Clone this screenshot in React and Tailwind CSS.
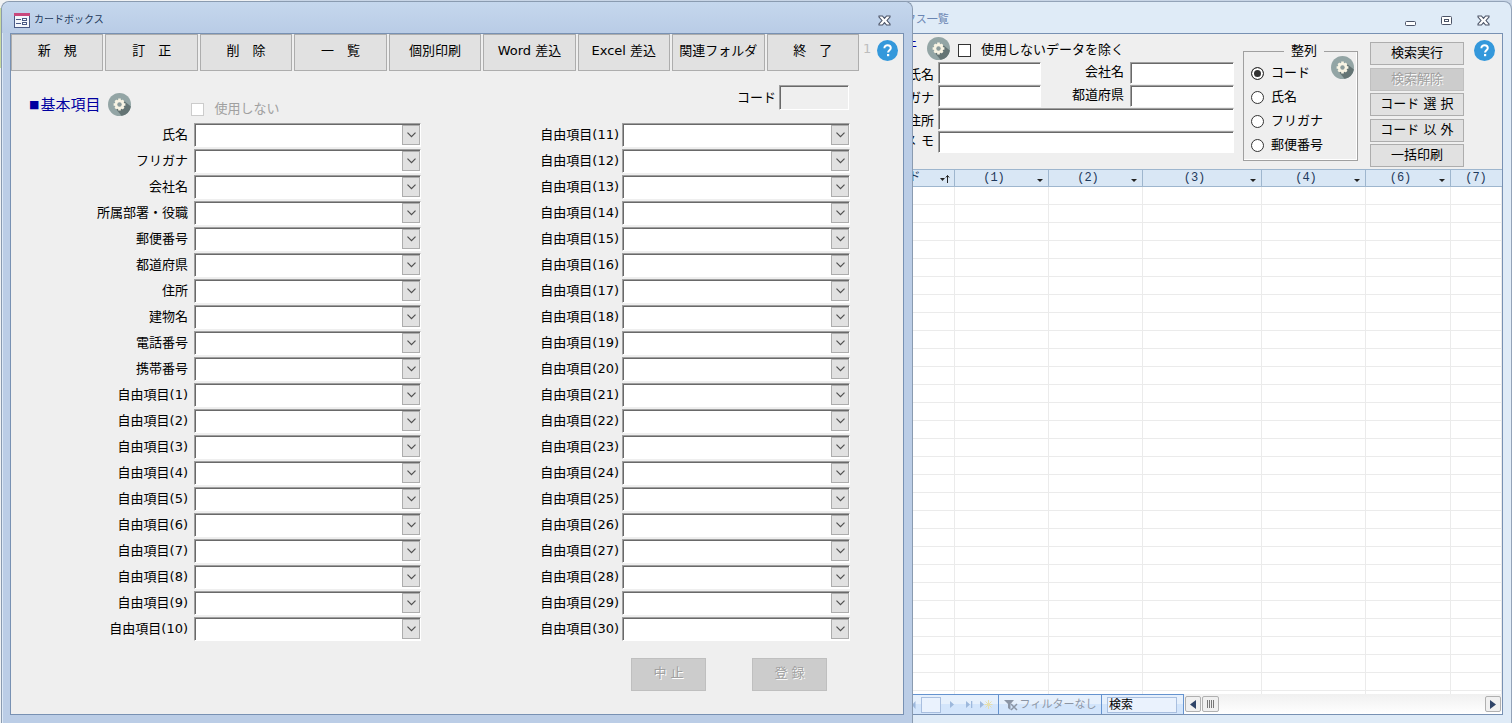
import { useState } from 'react';

const toolbar = ['新　規', '訂　正', '削　除', '一　覧', '個別印刷', 'Word 差込', 'Excel 差込', '関連フォルダ', '終　了'];

const leftFields = [
  '氏名', 'フリガナ', '会社名', '所属部署・役職', '郵便番号', '都道府県', '住所', '建物名', '電話番号', '携帯番号',
  ...Array.from({ length: 10 }, (_, i) => `自由項目(${i + 1})`),
];
const rightFields = Array.from({ length: 20 }, (_, i) => `自由項目(${i + 11})`);

const sortOptions = ['コード', '氏名', 'フリガナ', '郵便番号'];
const columns = ['(1)', '(2)', '(3)', '(4)', '(6)', '(7)'];

const sunken = 'border border-t-[#a0a0a0] border-l-[#a0a0a0] border-r-white border-b-white shadow-[inset_1px_1px_0_#696969] outline-none rounded-none';

function GearIcon() {
  return (
    <svg width="23" height="23" viewBox="0 0 23 23" className="block">
      <circle cx="11.5" cy="11.5" r="11.5" fill="#93a5a5" />
      <path d="M15.5 7.5 L22.9 13.5 A11.5 11.5 0 0 1 13.5 22.8 L7.5 15.5 Z" fill="#647474" />
      <g stroke="#f7f3e3" strokeWidth="2.6">
        <path d="M11.5 5.600v11.800M5.600 11.500h11.800M7.400 7.400l8.200 8.200M15.600 7.400l-8.200 8.200" />
      </g>
      <circle cx="11.5" cy="11.5" r="4.8" fill="#f7f3e3" />
      <circle cx="11.5" cy="11.5" r="2.2" fill="#8c9c9c" />
    </svg>
  );
}

function HelpButton() {
  return (
    <button type="button" aria-label="ヘルプ" className="block shrink-0">
      <svg width="21" height="21" viewBox="0 0 21 21" className="block">
        <circle cx="10.5" cy="10.5" r="10.5" fill="#3498db" />
        <path d="M7.4 8.2c0-1.9 1.3-3 3.2-3s3.2 1.1 3.2 2.8c0 2.2-2.7 2.3-2.7 4.5" fill="none" stroke="#fff" strokeWidth="2" />
        <rect x="10" y="14" width="2.2" height="2.2" fill="#fff" />
      </svg>
    </button>
  );
}

function CloseIcon() {
  return (
    <svg width="13" height="11" viewBox="0 0 13 11" className="block">
      <path
        d="M1 1h3.4l2.1 2.4L8.600 1H12v1L9 5.500l3 3.500v1H8.600L6.500 7.600 4.400 10H1V9l3-3.500L1 2z"
        fill="#fff" stroke="#4b5366" strokeWidth="1.1"
      />
    </svg>
  );
}

function FormIcon() {
  return (
    <svg width="16" height="15" viewBox="0 0 16 15" className="block">
      <rect x="0.500" y="0.500" width="15" height="14" fill="#f4f7fc" stroke="#4a5a85" />
      <rect width="16" height="3" fill="#c9487c" />
      <path d="M2 6.500h5M2 10.500h5" stroke="#4a5a85" />
      <rect x="8.500" y="5.500" width="4" height="2" fill="#fff" stroke="#4a5a85" />
      <rect x="8.500" y="9.500" width="4" height="2" fill="#fff" stroke="#4a5a85" />
    </svg>
  );
}

function Combo({ id, label, labelClass }) {
  return (
    <div className="flex items-center">
      <label htmlFor={id} className={`shrink-0 text-right whitespace-nowrap ${labelClass}`}>{label}</label>
      <div className="relative flex-1 min-w-0 h-6">
        <select id={id} className={`block w-full h-6 appearance-none bg-white ${sunken}`} />
        <span className="absolute top-[2px] bottom-[2px] right-[1px] w-[18px] border border-[#adadad] bg-[#e1e1e1] flex items-center justify-center pointer-events-none">
          <svg width="9" height="6" viewBox="0 0 9 6"><path d="M0.500 0.700l4 4 4-4" fill="none" stroke="#505050" strokeWidth="1.200" /></svg>
        </span>
      </div>
    </div>
  );
}

function CardWindow() {
  return (
    <section className="relative z-10 flex-1 min-w-0 flex flex-col rounded-t-lg border border-b-0 border-[#8a9bb0] bg-[#bbcde6] shadow-[inset_1px_1px_0_#dce8f6]">
      <header className="h-[31px] shrink-0 flex items-center pl-3 pr-[21px] pt-[5px] rounded-t-lg bg-linear-to-b from-[#c5d7ed] to-[#b9cce6]">
        <FormIcon />
        <h1 className="ml-1 text-[10px] text-[#1e395b]">カードボックス</h1>
        <button type="button" aria-label="閉じる" className="ml-auto"><CloseIcon /></button>
      </header>
      <main className="flex-1 flex flex-col mx-2 mb-2 border border-[#7891b3] bg-[#efefef]">
        <nav className="flex">
          <div className="flex-1 flex gap-[2px]">
            {toolbar.map((t) => (
              <button key={t} type="button" className="flex-1 basis-0 h-[37px] pb-1 border border-[#adadad] bg-[#e1e1e1] whitespace-nowrap">{t}</button>
            ))}
          </div>
          <div className="w-11 flex items-center pb-1 pl-1 gap-[6px]">
            <span className="text-[#bdbdbd] pb-1">1</span>
            <HelpButton />
          </div>
        </nav>

        <div className="flex items-start pt-3 h-[52px] pl-[18px] pr-[54px]">
          <h2 className="mt-3 flex items-center text-[15px] leading-5 text-[#0000a0]">
            <span className="text-[11px] mr-[1px]">■</span>基本項目
          </h2>
          <button type="button" aria-label="項目設定" className="mt-[10px] ml-2"><GearIcon /></button>
          <label className="mt-4 ml-[60px] flex items-center gap-[10px] text-[#a0a0a0]">
            <input type="checkbox" disabled className="appearance-none size-[13px] border border-[#cccccc] bg-white" />
            使用しない
          </label>
          <div className="ml-auto mt-[2px] flex items-center gap-[3px]">
            <label htmlFor="code">コード</label>
            <input id="code" readOnly className={`w-[70px] h-[25px] bg-[#efefef] ${sunken}`} />
          </div>
        </div>

        <div className="flex pr-[53px]">
          <div className="flex-1 basis-[410px] flex flex-col gap-[2px]">
            {leftFields.map((f, i) => <Combo key={f} id={`left-${i}`} label={f} labelClass="w-[183px] pr-[6px]" />)}
          </div>
          <div className="flex-1 basis-[429px] flex flex-col gap-[2px]">
            {rightFields.map((f, i) => <Combo key={f} id={`right-${i}`} label={f} labelClass="w-[201px] pr-[3px]" />)}
          </div>
        </div>

        <div className="flex justify-end gap-[46px] mt-[17px] pr-[76px]">
          {['中 止', '登 録'].map((t) => (
            <button key={t} type="button" disabled className="w-[75px] h-[33px] pb-1 border border-[#bfbfbf] bg-[#cccccc] text-[#a0a0a0] [text-shadow:1px_1px_0_#fff]">{t}</button>
          ))}
        </div>
      </main>
    </section>
  );
}

function SearchForm() {
  const [sort, setSort] = useState('コード');
  const input = `h-[22px] bg-white ${sunken}`;
  return (
    <div className="flex items-start h-[135px] shrink-0 bg-[#efefef]">
      <div className="flex-1 min-w-0">
        <div className="flex items-center h-7">
          <h2 className="w-[94px] text-right text-[15px] text-[#0000a0] leading-5 pb-1">条件</h2>
          <button type="button" aria-label="検索設定" className="ml-[10px]"><GearIcon /></button>
          <label className="ml-[8px] mt-1 flex items-center gap-[10px] whitespace-nowrap">
            <input type="checkbox" className="appearance-none size-[13px] border border-[#333333] bg-white" />
            使用しないデータを除く
          </label>
        </div>
        <div className="grid grid-cols-[111px_107px_83px_minmax(0,1fr)] gap-y-[1px] leading-[19px]">
          <label htmlFor="s-name" className="text-right pt-[3px]">氏名</label>
          <input id="s-name" className={`ml-1 ${input}`} />
          <label htmlFor="s-company" className="text-right">会社名</label>
          <input id="s-company" className={`ml-[6px] ${input}`} />
          <label htmlFor="s-kana" className="text-right pt-[3px]">フリガナ</label>
          <input id="s-kana" className={`ml-1 ${input}`} />
          <label htmlFor="s-pref" className="text-right">都道府県</label>
          <input id="s-pref" className={`ml-[6px] ${input}`} />
          <label htmlFor="s-address" className="text-right pt-[3px]">住所</label>
          <input id="s-address" className={`ml-1 col-span-3 ${input}`} />
          <label htmlFor="s-memo" className="text-right">メ モ</label>
          <input id="s-memo" className={`ml-1 col-span-3 ${input}`} />
        </div>
      </div>

      <fieldset className="relative ml-[9px] mt-[7px] w-[115px] h-[120px] shrink-0 border border-[#a0a0a0] pl-[7px] shadow-[inset_-1px_-1px_0_#fff]">
        <legend className="mx-auto px-[7px]">整列</legend>
        <div className="flex flex-col gap-1 pt-[2px]">
          {sortOptions.map((o) => (
            <label key={o} className="flex items-center gap-[7px]">
              <input
                type="radio" name="sort" checked={sort === o} onChange={() => setSort(o)}
                className="appearance-none size-[13px] rounded-full border border-[#333333] bg-white checked:bg-[#333333] checked:shadow-[inset_0_0_0_2px_white]"
              />
              {o}
            </label>
          ))}
        </div>
        <button type="button" aria-label="整列設定" className="absolute -top-[5px] right-[3px]"><GearIcon /></button>
      </fieldset>

      <div className="ml-3 mt-2 w-[94px] h-[125px] shrink-0 flex flex-col justify-between">
        {['検索実行', '検索解除', 'コード 選 択', 'コード 以 外', '一括印刷'].map((t) => (
          <button
            key={t} type="button" disabled={t === '検索解除'}
            className="h-[23px] pb-[2px] border border-[#adadad] bg-[#e1e1e1] leading-5 disabled:border-[#bfbfbf] disabled:bg-[#cccccc] disabled:text-[#a0a0a0] disabled:[text-shadow:1px_1px_0_#fff]"
          >
            {t}
          </button>
        ))}
      </div>
      <div className="ml-[10px] mr-[7px] mt-[6px]"><HelpButton /></div>
    </div>
  );
}

function RecordTable() {
  return (
    <div className="flex-1 min-h-0 overflow-hidden bg-white">
      <table className="w-full table-fixed border-collapse">
        <colgroup>
          <col className="w-[131px]" />
          <col className="w-[94px]" />
          <col className="w-[94px]" />
          <col className="w-[119px]" />
          <col className="w-[104px]" />
          <col className="w-[85px]" />
          <col />
        </colgroup>
        <thead>
          <tr className="h-[17px] bg-[#d9e7f5] text-[#1e395b] font-['Liberation_Mono','Noto_Sans_CJK_JP',monospace] text-[12px] leading-[15px]">
            <th className="p-0 font-normal border-y border-r border-[#9eb6ce]">
              <div className="flex items-center justify-end gap-[18px] pr-1">
                コード
                <svg width="11" height="9" viewBox="0 0 11 9"><path d="M1 4h5L3.500 7z" fill="#222" /><path d="M8.500 9V1.500M6.800 3.500l1.700-2 1.700 2" stroke="#222" fill="none" /></svg>
              </div>
            </th>
            {columns.map((c) => (
              <th key={c} className="p-0 font-normal border-y border-r border-[#9eb6ce] last:border-r-0">
                <div className="flex items-center">
                  <span className="flex-1 text-center">{c}</span>
                  {c !== '(7)' && (
                    <svg width="14" height="9" viewBox="0 0 14 9"><path d="M3 5h6L6 8z" fill="#222" /></svg>
                  )}
                </div>
              </th>
            ))}
          </tr>
        </thead>
        <tbody>
          {Array.from({ length: 29 }, (_, r) => (
            <tr key={r} className="h-[18px]">
              {Array.from({ length: 7 }, (_, c) => <td key={c} className="p-0 border-b border-r border-[#ebebeb]" />)}
            </tr>
          ))}
        </tbody>
      </table>
    </div>
  );
}

function RecordNav() {
  return (
    <footer className="flex h-5 shrink-0 bg-[#f4f4f4]">
      <div className="w-[361px] shrink-0 flex items-stretch border-t border-r border-[#6593cf] bg-linear-to-b from-[#e6f0fc] from-50% to-[#d3e5fb] to-50%">
        <div className="w-[176px] flex items-center justify-end border-r border-[#6593cf]">
          <svg width="6" height="8" viewBox="0 0 6 8"><path d="M4.500 0v8L1 4z" fill="#9db8dc" /></svg>
          <input aria-label="レコード" className="ml-1 w-5 h-4 border border-[#a9bfdf] bg-[#eaf2fd] outline-none" />
          <svg width="57" height="11" viewBox="0 0 57 11">
            <g fill="#9db8dc">
              <path d="M9 2v7l4-3.500zM25 2v7l4-3.500zM30 2h1.300v7H30zM39 2v7l4-3.500z" />
            </g>
            <path d="M47.500 1v9M43.500 5.500h8M44.500 2.500l6 6M50.500 2.500l-6 6" stroke="#e6dfae" />
          </svg>
        </div>
        <div className="w-[103px] flex items-center justify-center gap-[2px] border-r border-[#6593cf] text-[#8b95a5] text-[11px] whitespace-nowrap">
          <svg width="14" height="12" viewBox="0 0 14 12"><path d="M0 1h10L6.500 5v6L4 9V5z" fill="#8b95a5" /><path d="M7 5l6 6M13 5l-6 6" stroke="#8b95a5" strokeWidth="1.500" /></svg>
          フィルターなし
        </div>
        <input aria-label="レコードの検索" defaultValue="検索" className="self-center ml-[5px] w-[70px] h-4 border border-[#a9bfdf] bg-[#eaf2fd] px-[1px] text-[12px] outline-none" />
      </div>
      <div className="flex-1 flex items-center gap-[1px] pl-[1px] pr-[1px] bg-linear-to-b from-[#f0f0f0] to-white">
        <button type="button" aria-label="左へ" className="w-4 h-4 flex items-center justify-center rounded-xs border border-[#b0b0b0] bg-[#f0f0f0]">
          <svg width="6" height="9" viewBox="0 0 6 9"><path d="M6 0v9L0 4.500z" fill="#2f4468" /></svg>
        </button>
        <span className="w-[17px] h-4 flex items-center justify-center rounded-xs border border-[#b0b0b0] bg-[#f0f0f0]">
          <svg width="8" height="8" viewBox="0 0 8 8"><path d="M0.500 0v8M2.500 0v8M4.500 0v8M6.500 0v8" stroke="#777" /></svg>
        </span>
        <button type="button" aria-label="右へ" className="ml-auto w-4 h-4 flex items-center justify-center rounded-xs border border-[#b0b0b0] bg-[#f0f0f0]">
          <svg width="6" height="9" viewBox="0 0 6 9"><path d="M0 0v9l6-4.500z" fill="#2f4468" /></svg>
        </button>
      </div>
    </footer>
  );
}

// Sits partly behind the card window
function ListWindow() {
  return (
    <section className="w-[699px] shrink-0 -ml-[100px] flex flex-col rounded-t-lg border border-b-0 border-[#93a3b8] bg-[#dfebf7]">
      <header className="h-[31px] shrink-0 flex items-center pl-9 pr-[21px] pt-[5px]">
        <h1 className="text-[11px] text-[#6b86b3]">カードボックス一覧</h1>
        <div className="ml-auto flex items-center gap-[25px]">
          <button type="button" aria-label="最小化">
            <svg width="11" height="11" viewBox="0 0 11 11" className="block"><rect x="0.500" y="6.500" width="10" height="4" rx="1" fill="#fff" stroke="#4b5366" /></svg>
          </button>
          <button type="button" aria-label="最大化">
            <svg width="11" height="9" viewBox="0 0 11 9" className="block"><rect x="0.500" y="0.500" width="10" height="8" rx="1" fill="#fff" stroke="#4b5366" /><rect x="3.500" y="3.500" width="4" height="2" fill="#fff" stroke="#4b5366" /></svg>
          </button>
          <button type="button" aria-label="閉じる"><CloseIcon /></button>
        </div>
      </header>
      <div className="flex-1 min-h-0 flex flex-col mx-2 mb-2 border border-[#7891b3]">
        <SearchForm />
        <RecordTable />
        <RecordNav />
      </div>
    </section>
  );
}

export default function App() {
  return (
    <div className="relative h-screen min-h-[723px] flex pt-[1px] pl-[1px] overflow-hidden bg-linear-to-r from-[#f0f2f4] from-[270px] to-[#c8d5e6] to-[270px] text-[13px] leading-5 text-black font-['DejaVu_Sans','Noto_Sans_CJK_JP',sans-serif]">
      {/* sliver of the window underneath */}
      <span className="absolute left-0 top-2 w-px h-[60px] bg-[#c9dba0]" />
      <CardWindow />
      <ListWindow />
    </div>
  );
}
